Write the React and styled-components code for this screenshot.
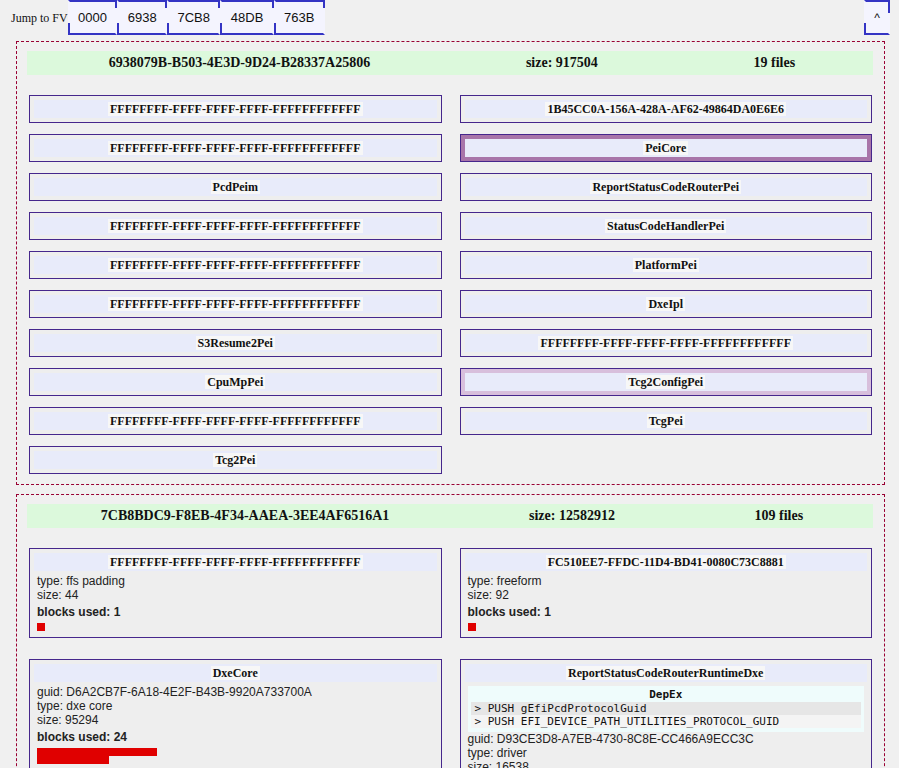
import styled, { createGlobalStyle } from 'styled-components';

const FF = 'FFFFFFFF-FFFF-FFFF-FFFF-FFFFFFFFFFFF';

const volumes = [
    {
        guid: '6938079B-B503-4E3D-9D24-B28337A25806',
        size: 917504,
        count: 19,
        rowGap: 11,
        files: [
            { name: FF }, { name: '1B45CC0A-156A-428A-AF62-49864DA0E6E6' },
            { name: FF }, { name: 'PeiCore', tone: 'strong' },
            { name: 'PcdPeim' }, { name: 'ReportStatusCodeRouterPei' },
            { name: FF }, { name: 'StatusCodeHandlerPei' },
            { name: FF }, { name: 'PlatformPei' },
            { name: FF }, { name: 'DxeIpl' },
            { name: 'S3Resume2Pei' }, { name: FF },
            { name: 'CpuMpPei' }, { name: 'Tcg2ConfigPei', tone: 'light' },
            { name: FF }, { name: 'TcgPei' },
            { name: 'Tcg2Pei' },
        ],
    },
    {
        guid: '7CB8BDC9-F8EB-4F34-AAEA-3EE4AF6516A1',
        size: 12582912,
        count: 109,
        rowGap: 21,
        files: [
            { name: FF, info: { type: 'ffs padding', size: 44, blocks: 1 } },
            { name: 'FC510EE7-FFDC-11D4-BD41-0080C73C8881', info: { type: 'freeform', size: 92, blocks: 1 } },
            { name: 'DxeCore', info: { guid: 'D6A2CB7F-6A18-4E2F-B43B-9920A733700A', type: 'dxe core', size: 95294, blocks: 24 } },
            {
                name: 'ReportStatusCodeRouterRuntimeDxe',
                info: {
                    depex: ['PUSH gEfiPcdProtocolGuid', 'PUSH EFI_DEVICE_PATH_UTILITIES_PROTOCOL_GUID'],
                    guid: 'D93CE3D8-A7EB-4730-8C8E-CC466A9ECC3C',
                    type: 'driver',
                    size: 16538,
                    blocks: 5,
                },
            },
        ],
    },
];

const jumps = ['0000', '6938', '7CB8', '48DB', '763B'];

const tones = {
    strong: '#a875a9',
    light: '#d8bfdc',
};

const FileCard = ({ name, tone, info }) => (
    <Card $tone={tone}>
        <Band><BandText>{name}</BandText></Band>
        {info && (
            <Details>
                {info.depex && (
                    <DepEx>
                        <DepExTitle>DepEx</DepExTitle>
                        {info.depex.map((op, i) => (
                            <DepExRow key={i} $odd={i % 2 === 0}>{'> ' + op}</DepExRow>
                        ))}
                    </DepEx>
                )}
                {info.guid && <div>guid: {info.guid}</div>}
                <div>type: {info.type}</div>
                <div>size: {info.size}</div>
                <BlocksTitle>blocks used: {info.blocks}</BlocksTitle>
                <Blocks>
                    {Array.from({ length: info.blocks }).map((_, i) => <Block key={i} />)}
                </Blocks>
            </Details>
        )}
    </Card>
);

const App = () => (
    <>
        <GlobalStyle />
        <Nav>
            <JumpLabel>Jump to FV</JumpLabel>
            {jumps.map((j) => <NavButton key={j}>{j}</NavButton>)}
            <TopButton>^</TopButton>
        </Nav>
        {volumes.map((v) => (
            <Volume key={v.guid}>
                <VolumeHeader>
                    <span>{v.guid}</span>
                    <span>size: {v.size}</span>
                    <span>{v.count} files</span>
                </VolumeHeader>
                <FileGrid $rowGap={v.rowGap}>
                    {v.files.map((f, i) => <FileCard key={i} {...f} />)}
                </FileGrid>
            </Volume>
        ))}
    </>
);

const GlobalStyle = createGlobalStyle`
    body {
        margin: 0;
        background: #f0f0f0;
        color: #111;
        font-family: "Liberation Serif", "Times New Roman", serif;
    }
`;

const Nav = styled.nav`
    display: flex;
    align-items: stretch;
    height: 35px;
    padding: 0 9px 0 11px;
`;

const JumpLabel = styled.span`
    align-self: center;
    font-size: 12px;
    padding-top: 2px;
`;

const NavButton = styled.button`
    position: relative;
    box-sizing: border-box;
    height: 35px;
    padding: 0 8.4px;
    margin: 0;
    border: 2px solid transparent;
    border-top-color: #3434c4;
    border-bottom-color: #3434c4;
    background: #f4f4fe;
    color: #111;
    font: 13px "Liberation Sans", Arial, sans-serif;
    cursor: pointer;

    &::before {
        content: "";
        position: absolute;
        top: -2px;
        right: -2px;
        width: 2px;
        height: 8px;
        background: #3434c4;
    }
    &::after {
        content: "";
        position: absolute;
        bottom: -2px;
        left: -2px;
        width: 2px;
        height: 12px;
        background: #3434c4;
    }
`;

const TopButton = styled(NavButton)`
    margin-left: auto;
    padding: 0 8px;
    font-size: 12px;

    &::before {
        height: 13px;
    }
`;

const Volume = styled.section`
    margin: 6px 14px 9px 16px;
    border: 1px dashed #990033;
    padding: 9px 11px 10px 10px;
`;

const VolumeHeader = styled.div`
    display: flex;
    justify-content: space-around;
    align-items: center;
    height: 24px;
    padding-left: 4px;
    margin-bottom: 20px;
    background: #dcf9dc;
    font-size: 14px;
    font-weight: bold;
`;

const FileGrid = styled.div`
    display: grid;
    grid-template-columns: 1fr 1fr;
    column-gap: 18px;
    row-gap: ${(p) => p.$rowGap}px;
    align-items: start;
    margin: 0 1px 0 2px;
`;

const Card = styled.div`
    border: 1px solid #46278c;
    padding: 4px;
    background: ${(p) => tones[p.$tone] || '#eeeeee'};
`;

const Band = styled.div`
    height: 18px;
    line-height: 18px;
    background: #e8ebfa;
    font-size: 12px;
    font-weight: bold;
    text-align: center;
`;

const BandText = styled.span`
    padding: 0 2px;
    background: #f7f7f7;
`;

const Details = styled.div`
    padding: 3px 3px 2px;
    font: 12px/14px "Liberation Sans", Arial, sans-serif;
    color: #222;
`;

const BlocksTitle = styled.div`
    margin: 3px 0 4px;
    font-weight: bold;
`;

const Blocks = styled.div`
    display: flex;
    flex-wrap: wrap;
    width: 120px;
`;

const Block = styled.span`
    width: 8px;
    height: 8px;
    background: #e00000;
`;

const DepEx = styled.div`
    margin-top: 1px;
    padding: 2px 3px 4px;
    background: #effcfc;
    font: 11px "DejaVu Sans Mono", monospace;
    color: #111;
`;

const DepExTitle = styled.div`
    line-height: 14px;
    font-weight: bold;
    text-align: center;
`;

const DepExRow = styled.div`
    line-height: 13px;
    padding-left: 4px;
    white-space: pre;
    background: ${(p) => (p.$odd ? '#e6e6e6' : '#f4f4f4')};
`;

export default App;
